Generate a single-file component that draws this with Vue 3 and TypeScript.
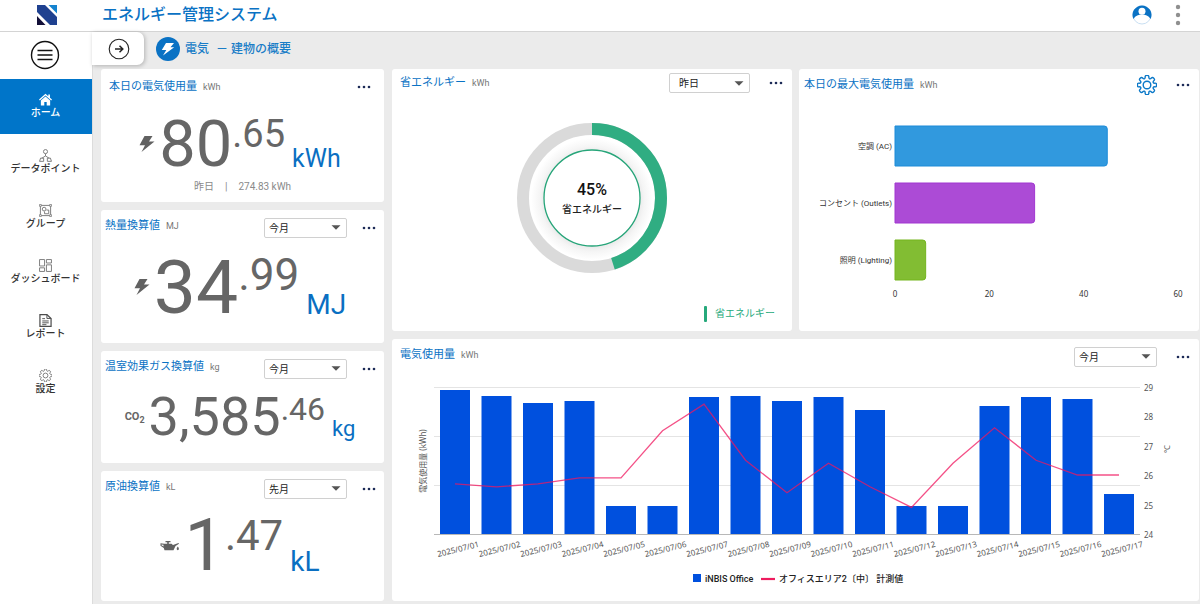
<script setup lang="ts">
import { ref } from 'vue'

interface NavItem {
  id: string
  label: string
}

interface Stat {
  id: string
  title: string
  unit: string
  whole: string
  fraction: string
  icon: 'bolt' | 'co2' | 'oil'
  period?: string
  note?: string[]
}

const navItems: NavItem[] = [
  { id: 'home', label: 'ホーム' },
  { id: 'points', label: 'データポイント' },
  { id: 'groups', label: 'グループ' },
  { id: 'dashboards', label: 'ダッシュボード' },
  { id: 'reports', label: 'レポート' },
  { id: 'settings', label: '設定' },
]
const activeNav = ref('home')

const periods = ['昨日', '今月', '先月']

const stats = ref<Stat[]>([
  { id: 'electricity', title: '本日の電気使用量', unit: 'kWh', whole: '80', fraction: '.65', icon: 'bolt', note: ['昨日', '|', '274.83 kWh'] },
  { id: 'heat', title: '熱量換算値', unit: 'MJ', whole: '34', fraction: '.99', icon: 'bolt', period: '今月' },
  { id: 'co2', title: '温室効果ガス換算値', unit: 'kg', whole: '3,585', fraction: '.46', icon: 'co2', period: '今月' },
  { id: 'oil', title: '原油換算値', unit: 'kL', whole: '1', fraction: '.47', icon: 'oil', period: '先月' },
])
const savingPeriod = ref('昨日')
const usagePeriod = ref('今月')

// Eight-toothed gear outline with softened corners.
function gearPath(c: number, outer: number, inner: number): string {
  const points: number[][] = []
  const step = Math.PI / 4
  const at = (r: number, t: number) => [c + r * Math.cos(t), c + r * Math.sin(t)]
  for (let i = 0; i < 8; i++) {
    const a = i * step - Math.PI / 2
    points.push(at(outer, a - step * 0.26), at(outer, a + step * 0.26), at(inner, a + step * 0.32), at(inner, a + step * 0.68))
  }
  const mid = (i: number) => {
    const p = points[i % points.length]
    const q = points[(i + 1) % points.length]
    return `${((p[0] + q[0]) / 2).toFixed(2)} ${((p[1] + q[1]) / 2).toFixed(2)}`
  }
  const curves = points.map((_, i) => {
    const p = points[(i + 1) % points.length]
    return `Q${p[0].toFixed(2)} ${p[1].toFixed(2)} ${mid(i + 1)}`
  })
  return `M${mid(0)}${curves.join('')}Z`
}

const savingRate = 45
const ringRadius = 69
const ringLength = 2 * Math.PI * ringRadius

const categories = [
  { name: '空調 (AC)', value: 45, fill: '#3199de', stroke: '#1c8bd8' },
  { name: 'コンセント (Outlets)', value: 29.6, fill: '#ac4bd6', stroke: '#a137d0' },
  { name: '照明 (Lighting)', value: 6.5, fill: '#82bd33', stroke: '#74b51e' },
]
const categoryTicks = [0, 20, 40, 60]
const categoryX = (v: number) => 96 + (v * 283) / 60
function barPath(value: number, index: number): string {
  const x = categoryX(value)
  const y = 25 + index * 57
  return `M96 ${y}H${x - 3}q3 0 3 3v34q0 3 -3 3H96Z`
}

const usage = [144, 138, 131, 133, 28, 28, 137, 138, 133, 137, 124, 28, 28, 128, 137, 135, 40]
const temperature = [25.7, 25.6, 25.7, 25.9, 25.9, 27.5, 28.4, 26.5, 25.4, 26.4, 25.6, 24.9, 26.4, 27.6, 26.5, 26, 26]
const baseY = 161
const dayX = (i: number) => 63 + i * 41.5
const tempY = (t: number) => baseY - (t - 24) * 29.5
const dayLabel = (i: number) => `2025/07/${String(i + 1).padStart(2, '0')}`
const tempLine = temperature.map((t, i) => `${dayX(i)},${tempY(t)}`).join(' ')
const tempTicks = [24, 25, 26, 27, 28, 29]
</script>

<template>
  <div class="app">
    <header class="topbar">
      <svg class="logo" width="20" height="20" viewBox="0 0 20 20" aria-hidden="true">
        <path d="M0 0H8L20 12V20H13L0 7Z" fill="#1f4190" />
        <path d="M11.500 0H20V8.500Z" fill="#1583cf" />
        <path d="M0 11V20H8.500Z" fill="#130f38" />
      </svg>
      <h1>エネルギー管理システム</h1>
      <button class="plain" type="button" aria-label="ユーザー">
        <svg width="20" height="20" viewBox="0 0 20 20">
          <circle cx="10" cy="10" r="9" fill="#fff" stroke="#c9e0f3" />
          <path d="M1.400 14A9.500 9.500 0 1 1 18.600 14C16.400 10.700 13.500 9.600 10 9.600S3.600 10.700 1.400 14Z" fill="#0a72c4" />
          <circle cx="10" cy="6.200" r="3.500" fill="#fff" />
        </svg>
      </button>
      <button class="plain" type="button" aria-label="メニュー">
        <svg width="6" height="22" viewBox="0 0 6 22" fill="#8f8f8f">
          <circle cx="3" cy="3" r="2.200" /><circle cx="3" cy="11" r="2.200" /><circle cx="3" cy="19" r="2.200" />
        </svg>
      </button>
    </header>

    <div class="shell">
      <aside class="sidebar">
        <button class="plain burger" type="button" aria-label="サイドバー">
          <svg width="30" height="30" viewBox="0 0 30 30" fill="none" stroke="#111" stroke-width="1.400">
            <circle cx="15" cy="15" r="13.500" />
            <path d="M7.500 10.500H22.500M7.500 15H22.500M7.500 19.500H22.500" stroke-width="1.300" />
          </svg>
        </button>
        <nav>
          <a
            v-for="item in navItems"
            :key="item.id"
            href="#"
            class="nav-item"
            :class="{ active: item.id === activeNav }"
            @click.prevent="activeNav = item.id"
          >
            <svg width="13" height="13" viewBox="0 0 14 14" fill="none" stroke="#777" aria-hidden="true">
              <g v-if="item.id === 'home'" fill="#fff" stroke="none">
                <path d="M7 .7L0 7L.9 8L7 2.600L13.100 8L14 7L11.800 5V1.500H10V3.400Z" />
                <path d="M7 3.700L2 8V13.500H5.700V9.800H8.300V13.500H12V8Z" />
              </g>
              <g v-else-if="item.id === 'points'">
                <circle cx="7" cy="2.800" r="2.200" />
                <path d="M7 5V7.500M3 10L7 7.500L11 10" />
                <path d="M1.700 9.800L.6 13.300H5V9.800ZM12.300 9.800L13.400 13.300H9V9.800Z" />
              </g>
              <g v-else-if="item.id === 'groups'">
                <path d="M1.500 1.500H12.500V12.500H1.500Z" />
                <path d="M.5 .5H2.500V2.500H.5ZM11.500 .5H13.500V2.500H11.500ZM.5 11.500H2.500V13.500H.5ZM11.500 11.500H13.500V13.500H11.500Z" fill="#fff" stroke-width=".8" />
                <circle cx="5.500" cy="5.500" r="2" />
                <path d="M8 6.500H10.500V10.500H6V8" />
              </g>
              <g v-else-if="item.id === 'dashboards'">
                <path d="M.6 .6H6V7.500H.6ZM8 .6H13.400V4.300H8ZM.6 9.500H6V13.400H.6ZM8 6.300H13.400V13.400H8Z" />
              </g>
              <g v-else-if="item.id === 'reports'" stroke="#4c4c4c">
                <path d="M1 .6H8.500L13 4.800V13.400H1Z" stroke-width="1.300" />
                <path d="M8.500 .6V4.800H13M3.500 5H6.500M3.500 7.500H10.500M3.500 9.500H10.500M3.500 11.500H8" />
              </g>
              <g v-else>
                <path :d="gearPath(7, 7.1, 5)" />
                <circle cx="7" cy="7" r="2.600" />
              </g>
            </svg>
            <span>{{ item.label }}</span>
          </a>
        </nav>
      </aside>

      <main>
        <div class="crumbs">
          <button class="plain tab" type="button" aria-label="開く">
            <svg width="22" height="22" viewBox="0 0 22 22" fill="none" stroke="#222">
              <circle cx="11" cy="11" r="9.800" stroke-width="1.100" />
              <path d="M7 11H14.500M11.500 7.800L14.800 11L11.500 14.200" stroke-width="1.500" />
            </svg>
          </button>
          <svg class="badge" width="24" height="24" viewBox="0 0 24 24" aria-hidden="true">
            <circle cx="12" cy="12" r="12" fill="#0a72c4" />
            <path d="M10 6L18 6L14.500 10.200H18.200L7 18.500L10.300 13H5.800Z" fill="#fff" />
          </svg>
          <h2><span>電気</span><span>－ 建物の概要</span></h2>
        </div>

        <div class="board">
          <div class="stats">
            <section v-for="s in stats" :key="s.id" class="card stat" :class="s.id">
              <div class="card-head">
                <h3>{{ s.title }}</h3>
                <span class="unit">{{ s.unit }}</span>
                <span v-if="s.period" class="picker">
                  <select v-model="s.period" :aria-label="s.title">
                    <option v-for="p in periods" :key="p">{{ p }}</option>
                  </select>
                  <svg width="10" height="5" viewBox="0 0 10 5"><path d="M.5 .3H9.500L5 4.800Z" fill="#555" /></svg>
                </span>
                <button class="plain more" type="button" aria-label="その他">
                  <svg width="14" height="4" viewBox="0 0 14 4" fill="#1d2b57">
                    <circle cx="2" cy="2" r="1.300" /><circle cx="7" cy="2" r="1.300" /><circle cx="12" cy="2" r="1.300" />
                  </svg>
                </button>
              </div>
              <div class="reading">
                <svg v-if="s.icon === 'bolt'" class="mark" width="16" height="16" viewBox="0 0 16 16" aria-hidden="true">
                  <path d="M5.500 0H13.500L10 5.500H15.500L2.500 16L6 9.300H.5Z" fill="#616161" />
                </svg>
                <span v-else-if="s.icon === 'co2'" class="mark co2-mark">CO<sub>2</sub></span>
                <svg v-else class="mark" width="20" height="10" viewBox="0 0 20 10" aria-hidden="true">
                  <path d="M5.500 0H10.500V1.300H8.800V2.700H11.500L13 4L18.500 2L19 2.800L15.500 5L13.500 9.300H4.500L3.800 7L.5 4.800V2.200L4.200 2.700H7.200V1.300H5.500Z" fill="#616161" />
                  <path d="M1.500 3.400V4.300L3.500 5.600V3.700Z" fill="#fff" />
                  <path d="M17.800 5.500Q20 8.400 17.800 9.200Q15.600 8.400 17.800 5.500Z" fill="#616161" />
                </svg>
                <span class="whole">{{ s.whole }}</span>
                <span class="fraction">{{ s.fraction }}</span>
                <span class="measure">{{ s.unit }}</span>
              </div>
              <p v-if="s.note" class="note"><span v-for="n in s.note" :key="n">{{ n }}</span></p>
            </section>
          </div>

          <div class="charts">
            <section class="card">
              <div class="card-head low">
                <h3>省エネルギー</h3>
                <span class="unit">kWh</span>
                <span class="picker roomy">
                  <select v-model="savingPeriod" aria-label="省エネルギー">
                    <option v-for="p in periods" :key="p">{{ p }}</option>
                  </select>
                  <svg width="10" height="5" viewBox="0 0 10 5"><path d="M.5 .3H9.500L5 4.800Z" fill="#555" /></svg>
                </span>
                <button class="plain more" type="button" aria-label="その他">
                  <svg width="14" height="4" viewBox="0 0 14 4" fill="#1d2b57">
                    <circle cx="2" cy="2" r="1.300" /><circle cx="7" cy="2" r="1.300" /><circle cx="12" cy="2" r="1.300" />
                  </svg>
                </button>
              </div>
              <svg class="chart" viewBox="0 0 400 234" role="img" aria-label="省エネルギー 45%">
                <defs>
                  <radialGradient id="halo">
                    <stop offset=".72" stop-color="#e2e2e2" />
                    <stop offset=".86" stop-color="#f5f5f5" />
                    <stop offset="1" stop-color="#fff" />
                  </radialGradient>
                </defs>
                <circle cx="200" cy="101" :r="ringRadius" fill="none" stroke="#dadada" stroke-width="12" />
                <circle
                  cx="200" cy="101" :r="ringRadius" fill="none" stroke="#30ad82" stroke-width="12"
                  :stroke-dasharray="`${(ringLength * savingRate) / 100} ${ringLength}`"
                  transform="rotate(-90 200 101)"
                />
                <circle cx="200" cy="102" r="61" fill="url(#halo)" />
                <circle cx="200" cy="101" r="48" fill="#fff" stroke="#26a579" stroke-width="1.300" />
                <text x="200" y="98" class="rate">{{ savingRate }}%</text>
                <text x="200" y="116" class="rate-label">省エネルギー</text>
                <rect x="312" y="209" width="3" height="16" rx="1" fill="#26a97b" />
                <text x="323" y="220" class="key">省エネルギー</text>
              </svg>
            </section>

            <section class="card">
              <div class="card-head snug">
                <h3>本日の最大電気使用量</h3>
                <span class="unit">kWh</span>
                <button class="plain tune" type="button" aria-label="設定">
                  <svg width="20" height="20" viewBox="0 0 20 20" fill="none" stroke="#0a78c8" stroke-width="1.400">
                    <path :d="gearPath(10, 9.8, 6.8)" />
                    <circle cx="10" cy="10" r="3.800" />
                  </svg>
                </button>
                <button class="plain more" type="button" aria-label="その他">
                  <svg width="14" height="4" viewBox="0 0 14 4" fill="#1d2b57">
                    <circle cx="2" cy="2" r="1.300" /><circle cx="7" cy="2" r="1.300" /><circle cx="12" cy="2" r="1.300" />
                  </svg>
                </button>
              </div>
              <svg class="chart" viewBox="0 0 400 230" role="img" aria-label="本日の最大電気使用量">
                <g v-for="(c, i) in categories" :key="c.name">
                  <path :d="barPath(c.value, i)" :fill="c.fill" :stroke="c.stroke" />
                  <text x="93" :y="48 + i * 57" class="tick end category">{{ c.name }}</text>
                </g>
                <text v-for="t in categoryTicks" :key="t" :x="categoryX(t)" y="196" class="tick middle">{{ t }}</text>
              </svg>
            </section>

            <section class="card wide">
              <div class="card-head">
                <h3>電気使用量</h3>
                <span class="unit">kWh</span>
                <span class="picker">
                  <select v-model="usagePeriod" aria-label="電気使用量">
                    <option v-for="p in periods" :key="p">{{ p }}</option>
                  </select>
                  <svg width="10" height="5" viewBox="0 0 10 5"><path d="M.5 .3H9.500L5 4.800Z" fill="#555" /></svg>
                </span>
                <button class="plain more" type="button" aria-label="その他">
                  <svg width="14" height="4" viewBox="0 0 14 4" fill="#1d2b57">
                    <circle cx="2" cy="2" r="1.300" /><circle cx="7" cy="2" r="1.300" /><circle cx="12" cy="2" r="1.300" />
                  </svg>
                </button>
              </div>
              <svg class="chart" viewBox="0 0 807 228" role="img" aria-label="電気使用量">
                <path d="M42 14.500H748M42 63.500H748M42 112.500H748" stroke="#e4e4e4" />
                <path d="M42 161.500H748" stroke="#b8b8b8" />
                <rect v-for="(u, i) in usage" :key="i" :x="48 + i * 41.5" :y="baseY - u" width="30" :height="u" fill="#0050de" />
                <polyline :points="tempLine" fill="none" stroke="#f0175f" stroke-opacity=".75" stroke-width="1.300" />
                <text
                  v-for="(u, i) in usage" :key="i" :x="dayX(i) + 3" y="179" class="tick middle soft"
                  :transform="`rotate(-14 ${dayX(i) + 3} 176)`"
                >{{ dayLabel(i) }}</text>
                <text v-for="t in tempTicks" :key="t" x="752" :y="tempY(t) + 4" class="tick soft">{{ t }}</text>
                <text x="34" y="88" class="tick middle soft" transform="rotate(-90 34 88)">電気使用量 (kWh)</text>
                <text x="778" y="76" class="tick middle soft" transform="rotate(-90 778 76)">℃</text>
                <rect x="301" y="201" width="8" height="8" fill="#0050de" />
                <text x="313" y="209" class="series">iNBIS Office</text>
                <path d="M369 206H383" stroke="#ee1c5e" stroke-width="2.200" />
                <text x="387" y="209" class="series">オフィスエリア2〔中〕 計測値</text>
              </svg>
            </section>
          </div>
        </div>
      </main>
    </div>
  </div>
</template>

<style>
body {
  margin: 0;
  background: #fff;
}
</style>

<style scoped>
.app {
  min-height: 100vh;
  display: flex;
  flex-direction: column;
  font-family: Roboto, "Noto Sans CJK JP", sans-serif;
  color: #333;
}
h1, h2, h3, p {
  margin: 0;
  font-weight: 400;
}
svg {
  display: block;
  flex: none;
}
.plain {
  border: 0;
  padding: 0;
  background: none;
  cursor: pointer;
}
.topbar {
  display: flex;
  align-items: center;
  height: 31px;
  padding: 0 19px 2px 37px;
  box-sizing: border-box;
  background: #fff;
}
.topbar h1 {
  flex: 1;
  margin-left: 45px;
  font-size: 16px;
  line-height: 23px;
  font-weight: 500;
  color: #0a72c4;
}
.topbar .plain + .plain {
  margin-left: 23px;
}
.shell {
  flex: 1;
  display: flex;
  border-top: 1px solid #d4d4d4;
}
.sidebar {
  width: 92px;
  flex: none;
  background: #fff;
}
.burger {
  display: block;
  margin: 8px auto;
  padding-right: 2px;
}
.sidebar nav {
  display: flex;
  flex-direction: column;
}
.nav-item {
  height: 55px;
  padding: 14px 1px 0 0;
  box-sizing: border-box;
  display: flex;
  flex-direction: column;
  align-items: center;
  font-size: 10px;
  line-height: 14px;
  font-weight: 500;
  color: #333;
  text-decoration: none;
}
.nav-item.active {
  margin-bottom: 1px;
  margin-top: 1px;
  background: #0075c9;
  color: #fff;
}
main {
  flex: 1;
  min-width: 0;
  background: #ebebeb;
  box-shadow: inset 1px 0 #dcdcdc;
}
.crumbs {
  display: flex;
  align-items: center;
  height: 33px;
  margin-bottom: 4px;
}
.tab {
  width: 52px;
  height: 33px;
  padding-left: 16px;
  background: #fff;
  border-radius: 0 7px 7px 0;
  box-shadow: 1px 1px 4px rgba(0, 0, 0, 0.25);
}
.badge {
  margin-left: 12px;
}
.crumbs h2 {
  display: flex;
  gap: 7px;
  margin-left: 5px;
  font-size: 12px;
  line-height: 18px;
  font-weight: 500;
  color: #1a7dc7;
}
.board {
  display: flex;
  gap: 8px;
  padding: 0 1px 3px 9px;
}
.stats {
  width: 283px;
  flex: none;
  display: grid;
  grid-template-rows: 133fr 133fr 112fr 130fr;
  gap: 8px;
}
.charts {
  flex: 1;
  min-width: 0;
  display: grid;
  grid-template-columns: 1fr 1fr;
  gap: 8px 7px;
}
.wide {
  grid-column: 1 / -1;
}
.card {
  min-width: 0;
  min-height: 0;
  background: #fff;
  border-radius: 3px;
  display: flex;
  flex-direction: column;
}
.card-head {
  display: flex;
  align-items: center;
  height: 35px;
  margin-bottom: -1px;
  padding: 0 9px 0 8px;
}
.stat .card-head {
  padding: 0 8px 0 4px;
}
.electricity .card-head {
  padding: 0 13px 0 8px;
}
.card-head.low {
  height: 28px;
  margin: 0;
}
.card-head.snug {
  height: 32px;
  margin: 0;
  padding-left: 5px;
}
.card-head h3 {
  font-size: 11px;
  line-height: 16px;
  font-weight: 400;
  color: #0a72c4;
}
.card-head .unit {
  flex: 1;
  margin-left: 6px;
  font-size: 9px;
  line-height: 16px;
  color: #777;
}
.card-head:has(.picker) h3,
.card-head:has(.picker) .unit {
  padding-bottom: 3px;
}
.card-head.low h3,
.card-head.low .unit {
  padding-bottom: 0;
}
.picker {
  display: grid;
  align-items: center;
  width: 83px;
}
.picker select,
.picker svg {
  grid-area: 1 / 1;
}
.picker svg {
  justify-self: end;
  margin-right: 6px;
  pointer-events: none;
}
.picker select {
  appearance: none;
  width: 100%;
  height: 20px;
  padding: 2px 16px 0 4px;
  border: 1px solid #d0d0d0;
  border-radius: 2px;
  background: #fff;
  font-family: inherit;
  font-size: 10px;
  line-height: 16px;
  color: #222;
}
.picker.roomy {
  width: 81px;
}
.picker.roomy select {
  padding-left: 9px;
}
.more {
  margin-left: 19px;
}
.stat .more {
  margin-left: 15px;
}
.reading {
  flex: 1;
  display: flex;
  justify-content: center;
  align-items: center;
  padding: 0 5px 14px 0;
  color: #666;
}
.mark {
  margin-right: 4px;
}
.co2-mark {
  font-size: 11px;
  line-height: 16px;
  font-weight: 700;
}
.co2-mark sub {
  font-size: 9px;
  line-height: 8px;
}
.whole {
  font-size: 65px;
  line-height: 48px;
}
.fraction {
  font-size: 38px;
  line-height: 28px;
  padding-bottom: 20px;
}
.measure {
  margin-left: 7px;
  padding-top: 30px;
  font-size: 25px;
  line-height: 18px;
  color: #0a6fc2;
}
.electricity .reading {
  padding: 4px 5px 0 0;
}
.heat .whole {
  font-size: 75px;
  line-height: 56px;
}
.heat .fraction {
  font-size: 44px;
  line-height: 32px;
  padding-bottom: 24px;
}
.heat .measure {
  font-size: 28px;
  line-height: 20px;
  padding-top: 36px;
}
.co2 .whole {
  font-size: 54px;
  line-height: 40px;
}
.co2 .fraction {
  font-size: 32px;
  line-height: 24px;
  padding-bottom: 16px;
}
.co2 .measure {
  font-size: 22px;
  line-height: 16px;
  padding-top: 24px;
}
.oil .whole {
  font-size: 72px;
  line-height: 52px;
}
.oil .fraction {
  font-size: 42px;
  line-height: 32px;
  padding-bottom: 20px;
}
.oil .measure {
  font-size: 28px;
  line-height: 20px;
  padding-top: 32px;
}
.note {
  display: flex;
  justify-content: center;
  gap: 11px;
  padding-bottom: 9px;
  font-size: 10px;
  line-height: 12px;
  color: #8a8a8a;
}
.chart {
  width: 100%;
  height: auto;
}
.rate {
  font-size: 16px;
  font-weight: 500;
  text-anchor: middle;
  fill: #111;
}
.rate-label {
  font-size: 10px;
  font-weight: 500;
  text-anchor: middle;
  fill: #222;
}
.key {
  font-size: 10px;
  fill: #26a97b;
}
.tick {
  font-family: "Noto Sans", "Noto Sans CJK JP", sans-serif;
  font-size: 8px;
  fill: #333;
}
.tick.category {
  font-family: Roboto, "Noto Sans CJK JP", sans-serif;
}
.tick.soft {
  fill: #555;
}
.middle {
  text-anchor: middle;
}
.end {
  text-anchor: end;
}
.series {
  font-size: 9px;
  font-weight: 500;
  fill: #222;
}
</style>
